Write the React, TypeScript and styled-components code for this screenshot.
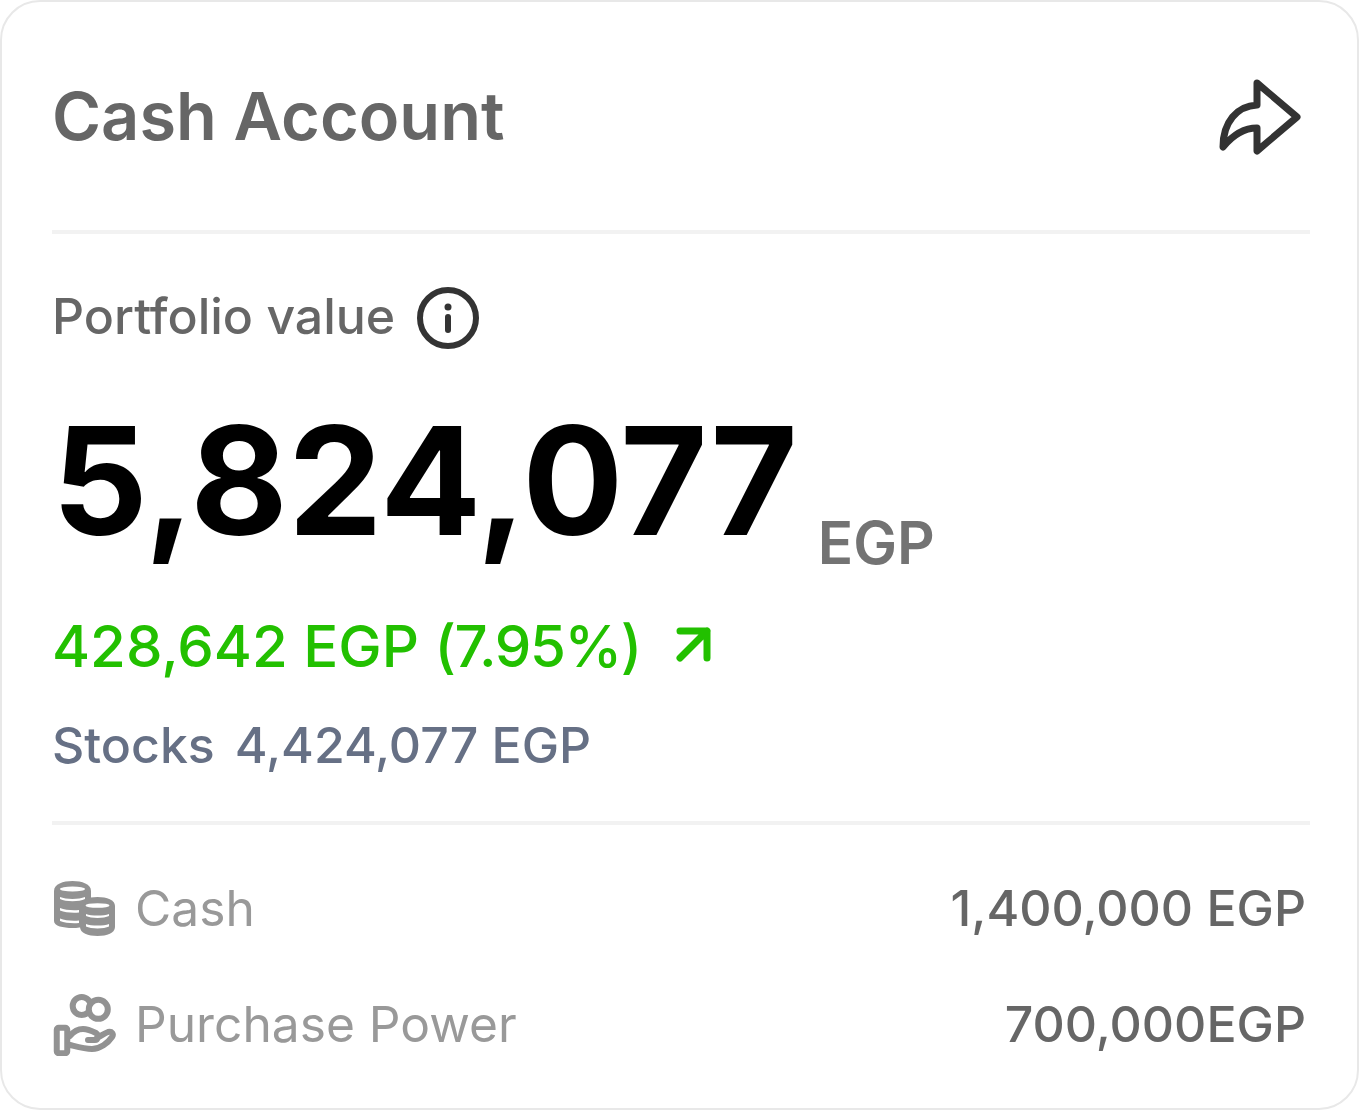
import React from "react";
import styled, { createGlobalStyle } from "styled-components";

const Global = createGlobalStyle`
  html, body {
    margin: 0;
    padding: 0;
    background: #fff;
  }
  * { box-sizing: border-box; }
`;

const Card = styled.div`
  width: 1359px;
  height: 1110px;
  padding: 0 47px 0 50px;
  background: #fff;
  border: 2px solid #e8e8e8;
  border-radius: 40px;
  font-family: Inter, "Liberation Sans", sans-serif;
  display: flex;
  flex-direction: column;
`;

const Header = styled.div`
  height: 232px;
  flex: none;
  display: flex;
  align-items: center;
  justify-content: space-between;
  padding: 0 5px 2px 0;
  border-bottom: 4px solid #f2f2f2;
`;

const Title = styled.h1`
  margin: 0;
  font-size: 66.67px;
  font-weight: 600;
  color: #666;
`;

const Body = styled.div`
  flex: none;
  height: 591px;
  border-bottom: 4px solid #f2f2f2;
  display: flex;
  flex-direction: column;
`;

const LabelRow = styled.div`
  display: flex;
  align-items: center;
  gap: 22px;
  margin-top: 52px;
`;

const Label = styled.span`
  font-size: 50px;
  font-weight: 500;
  margin-bottom: 3px;
  color: #666;
`;

const ValueRow = styled.div`
  display: flex;
  align-items: flex-end;
  gap: 20px;
  margin-top: 57px;
`;

const Value = styled.span`
  font-size: 150px;
  font-weight: 700;
  line-height: 1;
  color: #000;
`;

const Unit = styled.span`
  font-size: 58.5px;
  font-weight: 600;
  line-height: 1;
  margin-bottom: -16px;
  color: #737373;
`;

const Change = styled.div`
  display: flex;
  align-items: center;
  gap: 34px;
  margin-top: 55px;
  font-size: 58.1px;
  font-weight: 500;
  color: #22c000;
`;

const Percent = styled.span`
  letter-spacing: -1.4px;
`;

const ArrowSvg = styled.svg`
  margin-top: -3px;
`;

const Stocks = styled.div`
  display: flex;
  gap: 20px;
  margin-top: 34px;
  font-size: 50px;
  font-weight: 500;
  color: #667085;
`;

const Rows = styled.div`
  display: flex;
  flex-direction: column;
  gap: 54px;
  margin-top: 52px;
  padding-right: 4px;
`;

const Row = styled.div`
  height: 62px;
  display: flex;
  align-items: center;
  justify-content: space-between;
`;

const RowLabel = styled.div`
  display: flex;
  align-items: center;
  gap: 19px;
  font-size: 49.7px;
  color: #999;
`;

const RowValue = styled.div`
  font-size: 50px;
  font-weight: 500;
  color: #666;
`;

const ShareIcon = () => (
  <svg width="88" height="84" viewBox="0 -3 88 84" fill="none" stroke="#333" strokeWidth="7" strokeLinejoin="round" strokeLinecap="round">
    <path d="M40 7 L80 41 L40 75 V52 C26 52 15 60 6 71 C6 46 20 30 40 29 Z" />
  </svg>
);

const InfoIcon = () => (
  <svg width="62" height="62" viewBox="0 0 62 62" fill="none">
    <circle cx="31" cy="31" r="28" stroke="#333" strokeWidth="6" />
    <circle cx="31" cy="20" r="3.5" fill="#333" />
    <rect x="28" y="27" width="6" height="19" rx="3" fill="#333" />
  </svg>
);

const ArrowIcon = () => (
  <ArrowSvg width="38" height="38" viewBox="0 0 38 38" fill="none" stroke="#22c000" strokeWidth="7" strokeLinecap="round" strokeLinejoin="round">
    <path d="M5 5 H32 V32 M32 5 L5 32" />
  </ArrowSvg>
);

const CoinsIcon = () => (
  <svg width="64" height="58" viewBox="0 0 64 58">
    <path fill="#929292" d="M2 12 C2 5 11 2 20.5 2 C30 2 39 5 39 12 V42 C39 47 30 49 20.5 49 C11 49 2 47 2 42 Z" />
    <path fill="#929292" d="M28 27 C28 21 36 18 45.5 18 C55 18 63 21 63 27 V48 C63 54 55 57 45.5 57 C36 57 28 54 28 48 Z" />
    <g fill="#fff">
      <ellipse cx="20.5" cy="10" rx="12.5" ry="2.6" />
      <path d="M8 18 C14 20.5 27 20.5 33 18 V20 C27 23 14 23 8 20 Z" />
      <path d="M8 29 C13 31 20 31.5 27 31 V33.5 C20 34 13 33.5 8 31.5 Z" />
      <path d="M8 39.5 C13 41.5 20 42 27 41.5 V44 C20 44.5 13 44 8 42 Z" />
      <ellipse cx="45.5" cy="26.5" rx="12" ry="2.3" />
      <path d="M34 35 C39 37 52 37 57 35 V37 C52 39.5 39 39.5 34 37 Z" />
      <path d="M34 45 C39 47 52 47 57 45 V47.5 C52 50 39 50 34 47.5 Z" />
    </g>
  </svg>
);

const HandIcon = () => (
  <svg width="64" height="63" viewBox="0 0 64 63" fill="none" stroke="#929292" strokeWidth="6" strokeLinejoin="round" strokeLinecap="round">
    <circle cx="29.7" cy="13" r="9" />
    <circle cx="46.3" cy="16.3" r="9.5" fill="#fff" />
    <rect x="4.75" y="34.75" width="10.5" height="25.5" rx="2" />
    <path d="M18 43 C22 38 26 36 31 36 C35 36 40 38 44 40 C47 42 46 47 43 47 H36 M45 45 C49 43 53 40 56 39 C60 38 62 41 60 44 C56 50 48 56 40 56 C33 56 26 54 18 52" />
  </svg>
);

export default function App() {
  return (
    <>
      <Global />
      <Card>
        <Header>
          <Title>Cash Account</Title>
          <ShareIcon />
        </Header>
        <Body>
          <LabelRow>
            <Label>Portfolio value</Label>
            <InfoIcon />
          </LabelRow>
          <ValueRow>
            <Value>5,824,077</Value>
            <Unit>EGP</Unit>
          </ValueRow>
          <Change>
            <span>
              428,642 EGP <Percent>(7.95%)</Percent>
            </span>
            <ArrowIcon />
          </Change>
          <Stocks>
            <span>Stocks</span>
            <span>4,424,077 EGP</span>
          </Stocks>
        </Body>
        <Rows>
          <Row>
            <RowLabel>
              <CoinsIcon />
              Cash
            </RowLabel>
            <RowValue>1,400,000 EGP</RowValue>
          </Row>
          <Row>
            <RowLabel>
              <HandIcon />
              Purchase Power
            </RowLabel>
            <RowValue>700,000EGP</RowValue>
          </Row>
        </Rows>
      </Card>
    </>
  );
}
